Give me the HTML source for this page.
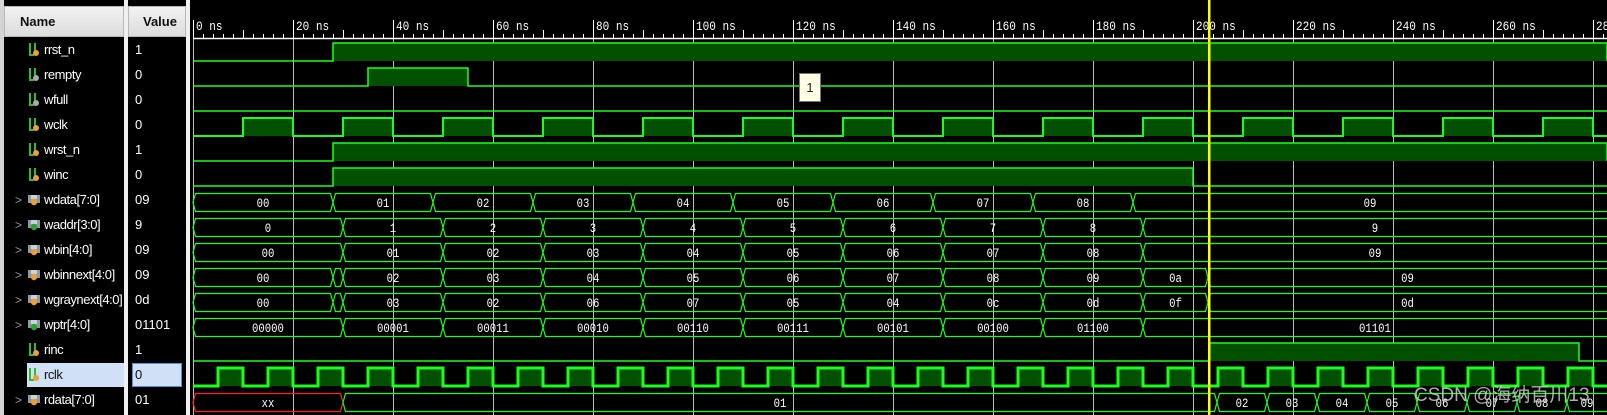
<!DOCTYPE html>
<html><head><meta charset="utf-8">
<style>
*{margin:0;padding:0;box-sizing:border-box}
body{width:1607px;height:415px;background:#000;position:relative;overflow:hidden;font-family:"Liberation Sans",Arial,sans-serif}
.abs{position:absolute}
.hdr{background:linear-gradient(#f2f2f2,#dcdcdc);border:1px solid #b8b8b8;font-weight:bold;font-size:13px;color:#111;line-height:29px}
.nm{position:absolute;left:44px;color:#fff;font-size:13px;line-height:16px;letter-spacing:-0.45px;white-space:nowrap;z-index:2}
.vl{position:absolute;left:135px;color:#fff;font-size:13px;line-height:16px}
.arr{position:absolute;left:15px;color:#999;font-size:12px;line-height:16px}
</style></head><body>
<div class="abs" style="left:0;top:0;width:4px;height:415px;background:#d4d4d4"></div>
<div class="abs" style="left:124px;top:0;width:4px;height:415px;background:#f0f0f0"></div>
<div class="abs" style="left:186px;top:0;width:4px;height:415px;background:#f0f0f0"></div>
<div class="abs hdr" style="left:4px;top:6px;width:120px;height:31px;padding-left:15px">Name</div>
<div class="abs hdr" style="left:128px;top:6px;width:58px;height:31px;padding-left:14px">Value</div>
<div class="abs" style="left:27px;top:363px;width:97px;height:24px;background:#cfe0f7"></div>
<div class="abs" style="left:132px;top:363px;width:50px;height:24px;background:#cfe0f7;border:1px solid #5b8fd0"></div>
<div id="left"></div>
<svg id="w" class="abs" style="left:0;top:0" width="1607" height="415" xmlns="http://www.w3.org/2000/svg"></svg>
<script>
var names=[["rrst_n","1",0],["rempty","0",0],["wfull","0",0],["wclk","0",0],["wrst_n","1",0],["winc","0",0],["wdata[7:0]","09",1],["waddr[3:0]","9",2],["wbin[4:0]","09",1],["wbinnext[4:0]","09",1],["wgraynext[4:0]","0d",1],["wptr[4:0]","01101",2],["rinc","1",0],["rclk","0",0],["rdata[7:0]","01",1]];
var h="";
names.forEach(function(n,i){
 var y=42+25*i;var sel=(i==13);
 var c=sel?"#111":"#fff";
 if(n[2]){h+='<div class="arr" style="top:'+y+'px">&gt;</div>';
  var dot=n[2]==1?"#f0a030":"#30a030";
  h+='<svg class="abs" style="left:27px;top:'+(y+1)+'px" width="14" height="14"><path d="M1 2h12v8H1z" fill="#8a9aa8"/><path d="M4 2v4h6V2" fill="#c8d4dc"/><circle cx="7" cy="9" r="3.2" fill="'+dot+'"/></svg>';
 }else{
  var dot=(i==1||i==2)?"#aaa":"#f0a030";
  h+='<svg class="abs" style="left:28px;top:'+y+'px" width="12" height="15"><path d="M2 1v12h4M7 1v8" stroke="#2bbf2b" stroke-width="2" fill="none"/><circle cx="8" cy="11" r="3" fill="'+dot+'"/></svg>';
 }
 h+='<div class="nm" style="top:'+y+'px;color:'+c+'">'+n[0]+'</div>';
 h+='<div class="vl" style="top:'+y+'px;color:'+c+'">'+n[1]+'</div>';
});
document.getElementById("left").innerHTML=h;

var G="#1aff1a",F="#005000",s="";
s+='<rect x="190" y="0" width="1417" height="415" fill="#000"/>';
for(var k=0;k<15;k++){var x=193+100*k;s+='<line x1="'+(x+.5)+'" y1="38" x2="'+(x+.5)+'" y2="415" stroke="#bdbdbd" stroke-width="1"/>';}
s+='<line x1="193" y1="38.5" x2="1607" y2="38.5" stroke="#fff" stroke-width="1.5"/>';
for(var x=193;x<1607;x+=10){var t=((x-193)%50==0);var big=((x-193)%100==0);
 s+='<line x1="'+(x+.5)+'" y1="'+(big?20:(t?30:34))+'" x2="'+(x+.5)+'" y2="38" stroke="#fff" stroke-width="1"/>';}
for(var k=0;k<15;k++){var x=193+100*k;s+='<text x="'+(x+3)+'" y="30" fill="#fff" font-family="Liberation Mono,monospace" font-size="13" transform="translate('+(x+3)+',30) scale(0.85,1) translate('+(-(x+3))+',-30)">'+(20*k)+' ns</text>';}
function scal(i,hi,w){var top=43+25*i,bot=61+25*i;var p="M193 "+bot;
 hi.forEach(function(a){s+='<rect x="'+a[0]+'" y="'+top+'" width="'+(a[1]-a[0])+'" height="'+(bot-top)+'" fill="'+F+'"/>';p+=" H"+a[0]+" V"+top+" H"+a[1]+" V"+bot;});
 p+=" H1607";s+='<path d="'+p+'" stroke="'+G+'" stroke-width="'+(w||1.5)+'" fill="none"/>';}
scal(0,[[333,1607]]);
scal(1,[[368,468]]);
scal(2,[]);
var wc=[];for(var k=0;k<14;k++)wc.push([243+100*k,293+100*k]);scal(3,wc,2);
scal(4,[[333,1607]]);
scal(5,[[333,1193]]);
scal(12,[[1209,1579]]);
var rc=[];for(var k=0;k<28;k++)rc.push([218+50*k,243+50*k]);scal(13,rc,3);
function bus(i,edges,vals,col0){var top=43+25*i+.5,bot=61+25*i+.5,mid=(top+bot)/2;
 var e=[193].concat(edges).concat([1610]);
 for(var j=0;j<e.length-1;j++){var a=e[j],b=e[j+1];var col=(j==0&&col0)?col0:G;
  var a2=a+2.5,b2=b-2.5;
  s+='<path d="M'+a+' '+mid+' L'+a2+' '+top+' H'+b2+' L'+b+' '+mid+' L'+b2+' '+bot+' H'+a2+' Z" stroke="'+col+'" stroke-width="1.2" fill="none"/>';
  if(vals[j]){var cx=(a+Math.min(b,1607))/2;s+='<text x="'+cx+'" y="'+(mid+4.5)+'" fill="#fff" text-anchor="middle" font-family="Liberation Mono,monospace" font-size="12.5" transform="translate('+cx+',0) scale(0.85,1) translate('+(-cx)+',0)">'+vals[j]+'</text>';}}}
var e28=[],e30=[];for(var k=0;k<9;k++){e28.push(333+100*k);e30.push(343+100*k);}
bus(6,e28,["00","01","02","03","04","05","06","07","08","09"]);
bus(7,e30,["0","1","2","3","4","5","6","7","8","9"]);
bus(8,e30,["00","01","02","03","04","05","06","07","08","09"]);
bus(9,[333].concat(e30).concat([1208]),["00","","02","03","04","05","06","07","08","09","0a","09"]);
bus(10,[333].concat(e30).concat([1208]),["00","","03","02","06","07","05","04","0c","0d","0f","0d"]);
bus(11,e30,["00000","00001","00011","00010","00110","00111","00101","00100","01100","01101"]);
var re=[343];for(var k=0;k<8;k++)re.push(1217+50*k);
bus(14,re,["xx","01","02","03","04","05","06","07","08","09"],"#ff2020");
s+='<rect x="1208" y="0" width="2.5" height="415" fill="#ffff00"/>';
s+='<rect x="799.5" y="73.5" width="21" height="28" fill="#fffde4" stroke="#777"/>';
s+='<text x="810" y="92" fill="#222" text-anchor="middle" font-family="Liberation Sans,sans-serif" font-size="13">1</text>';
s+='<text x="1414" y="401" fill="rgba(205,205,205,0.85)" font-family="Liberation Sans,Noto Sans CJK SC,sans-serif" font-size="19">CSDN @海纳百川13</text>';
document.getElementById("w").innerHTML=s;
</script>
</body></html>
